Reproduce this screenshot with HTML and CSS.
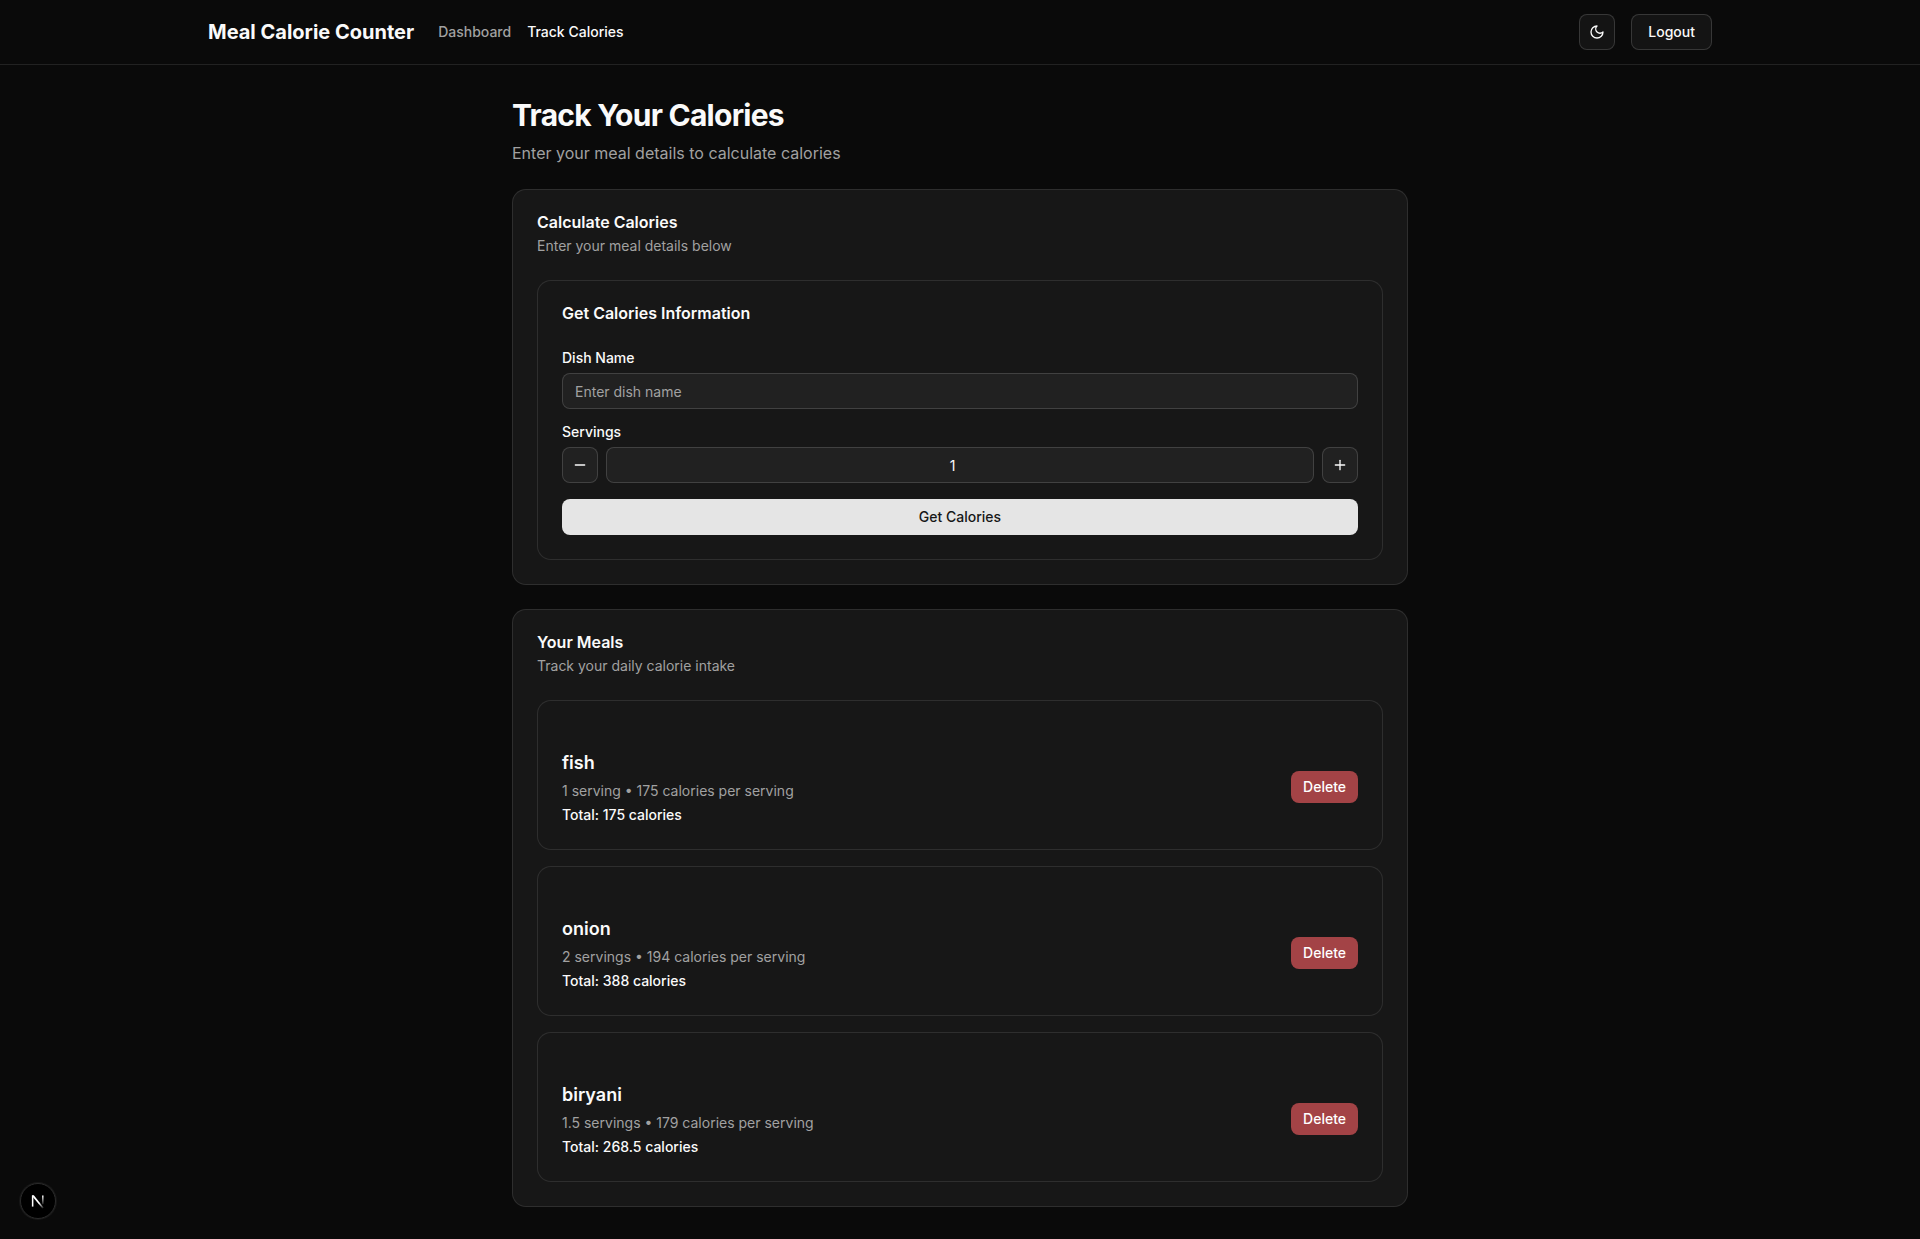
FILE: index.html
```html
<!DOCTYPE html>
<html lang="en">
<head>
<meta charset="utf-8">
<meta name="viewport" content="width=device-width, initial-scale=1">
<title>Meal Calorie Counter</title>
<link rel="stylesheet" href="styles.css">
</head>
<body>
<header class="site-header">
  <div class="container">
    <div class="header-left">
      <a class="brand" href="#">Meal Calorie Counter</a>
      <nav class="nav">
        <a class="nav-link" href="#">Dashboard</a>
        <a class="nav-link active" href="#" aria-current="page">Track Calories</a>
      </nav>
    </div>
    <div class="header-right">
      <button class="btn btn-outline btn-icon" type="button" aria-label="Toggle theme">
        <svg class="icon" viewBox="0 0 24 24"><path d="M12 3a6 6 0 0 0 9 9 9 9 0 1 1-9-9Z"/></svg>
      </button>
      <button class="btn btn-outline" type="button">Logout</button>
    </div>
  </div>
</header>

<main class="page">
  <div class="page-heading">
    <h1 class="page-title">Track Your Calories</h1>
    <p class="page-subtitle">Enter your meal details to calculate calories</p>
  </div>

  <section class="card">
    <div class="card-header">
      <h2 class="card-title">Calculate Calories</h2>
      <p class="card-description">Enter your meal details below</p>
    </div>
    <div class="card">
      <h3 class="card-title form-title">Get Calories Information</h3>
      <form class="form">
        <div class="field">
          <label class="label" for="dish">Dish Name</label>
          <input class="input" id="dish" type="text" placeholder="Enter dish name">
        </div>
        <div class="field">
          <label class="label" for="servings">Servings</label>
          <div class="stepper">
            <button class="btn btn-step btn-icon" type="button" aria-label="Decrease servings">
              <svg class="icon" viewBox="0 0 24 24"><path d="M5 12h14"/></svg>
            </button>
            <input class="input input-count" id="servings" type="number" min="0" step="0.5" value="1">
            <button class="btn btn-step btn-icon" type="button" aria-label="Increase servings">
              <svg class="icon" viewBox="0 0 24 24"><path d="M5 12h14"/><path d="M12 5v14"/></svg>
            </button>
          </div>
        </div>
        <button class="btn btn-primary" type="button">Get Calories</button>
      </form>
    </div>
  </section>

  <section class="card">
    <div class="card-header">
      <h2 class="card-title">Your Meals</h2>
      <p class="card-description">Track your daily calorie intake</p>
    </div>
    <div class="meals">
      <article class="card meal">
        <div class="meal-info">
          <h3 class="meal-name">fish</h3>
          <p class="meal-detail">1 serving • 175 calories per serving</p>
          <p class="meal-total">Total: 175 calories</p>
        </div>
        <button class="btn btn-danger" type="button">Delete</button>
      </article>
      <article class="card meal">
        <div class="meal-info">
          <h3 class="meal-name">onion</h3>
          <p class="meal-detail">2 servings • 194 calories per serving</p>
          <p class="meal-total">Total: 388 calories</p>
        </div>
        <button class="btn btn-danger" type="button">Delete</button>
      </article>
      <article class="card meal">
        <div class="meal-info">
          <h3 class="meal-name">biryani</h3>
          <p class="meal-detail">1.5 servings • 179 calories per serving</p>
          <p class="meal-total">Total: 268.5 calories</p>
        </div>
        <button class="btn btn-danger" type="button">Delete</button>
      </article>
    </div>
  </section>
</main>

<button class="dev-badge" type="button" aria-label="Open Next.js Dev Tools">
  <svg class="dev-logo" viewBox="0 0 40 40" fill="none">
    <defs>
      <linearGradient id="fade-stem" x1="26" y1="13" x2="26" y2="26" gradientUnits="userSpaceOnUse">
        <stop stop-color="#fff"/><stop offset="1" stop-color="#fff" stop-opacity="0"/>
      </linearGradient>
      <linearGradient id="fade-diagonal" x1="22" y1="22" x2="28" y2="29" gradientUnits="userSpaceOnUse">
        <stop stop-color="#fff"/><stop offset="1" stop-color="#fff" stop-opacity="0"/>
      </linearGradient>
    </defs>
    <path d="M13.3 27V13.2" stroke="#fff" stroke-width="1.9"/>
    <path d="M12.4 12.8H14.8L27.2 28.4L25.6 29.4L13.3 14.8Z" fill="url(#fade-diagonal)"/>
    <path d="M26 13V24" stroke="url(#fade-stem)" stroke-width="1.9"/>
  </svg>
</button>
</body>
</html>
```
FILE: styles.css
```css
*,
*::before,
*::after {
  box-sizing: border-box;
}

:root {
  --background: #0a0a0a;
  --card: #171717;
  --foreground: #fafafa;
  --muted: #a1a1a1;
  --border: rgba(255, 255, 255, 0.1);
  --input-border: rgba(255, 255, 255, 0.15);
  --input-fill: rgba(255, 255, 255, 0.045);
}

body {
  margin: 0;
  background: var(--background);
  color: var(--foreground);
  font-family: Inter, "Liberation Sans", sans-serif;
  font-size: 16px;
  line-height: 24px;
}

h1, h2, h3, p {
  margin: 0;
}

a {
  color: inherit;
  text-decoration: none;
}

.site-header {
  border-bottom: 1px solid var(--border);
}

.container {
  display: flex;
  align-items: center;
  justify-content: space-between;
  max-width: 1536px;
  min-height: 64px;
  margin: 0 auto;
  padding: 0 16px;
}

.header-left {
  display: flex;
  align-items: center;
  gap: 24px;
}

.header-right,
.nav {
  display: flex;
  align-items: center;
  gap: 16px;
}

.brand {
  font-size: 20px;
  line-height: 28px;
  font-weight: 700;
}

.nav-link {
  font-size: 14px;
  line-height: 20px;
  font-weight: 500;
  color: var(--muted);
}

.nav-link.active {
  color: var(--foreground);
}

.btn {
  display: inline-flex;
  align-items: center;
  justify-content: center;
  height: 36px;
  padding: 0 16px;
  border: 0;
  border-radius: 8px;
  color: var(--foreground);
  font-family: inherit;
  font-size: 14px;
  line-height: 20px;
  font-weight: 500;
  cursor: pointer;
}

.btn-outline,
.btn-step {
  border: 1px solid var(--input-border);
  background: var(--input-fill);
}

.btn-icon {
  flex: none;
  width: 36px;
  padding: 0;
}

.btn-primary {
  background: #e5e5e5;
  color: #171717;
}

.btn-danger {
  height: 32px;
  padding: 0 12px;
  background: #a34346;
  color: #fff;
}

.icon {
  width: 16px;
  height: 16px;
  fill: none;
  stroke: currentColor;
  stroke-width: 2;
  stroke-linecap: round;
  stroke-linejoin: round;
}

.page {
  display: flex;
  flex-direction: column;
  gap: 24px;
  max-width: 928px;
  margin: 0 auto;
  padding: 32px 16px;
}

.page-heading {
  display: flex;
  flex-direction: column;
  gap: 8px;
}

.page-title {
  font-size: 30px;
  line-height: 36px;
  font-weight: 700;
  letter-spacing: -0.025em;
}

.page-subtitle {
  color: var(--muted);
}

.card {
  display: flex;
  flex-direction: column;
  gap: 24px;
  padding: 24px;
  border: 1px solid var(--border);
  border-radius: 14px;
  background: var(--card);
}

.card-header {
  display: flex;
  flex-direction: column;
  gap: 6px;
}

.card-title {
  font-size: 16px;
  line-height: 16px;
  font-weight: 600;
}

.form-title {
  padding-bottom: 6px;
}

.card-description,
.meal-detail {
  color: var(--muted);
  font-size: 14px;
  line-height: 20px;
}

.form,
.meals {
  display: flex;
  flex-direction: column;
  gap: 16px;
}

.field {
  display: flex;
  flex-direction: column;
  gap: 8px;
}

.label {
  font-size: 14px;
  line-height: 14px;
  font-weight: 500;
}

.input {
  width: 100%;
  height: 36px;
  padding: 4px 12px;
  border: 1px solid var(--input-border);
  border-radius: 8px;
  background: var(--input-fill);
  color: var(--foreground);
  font-family: inherit;
  font-size: 14px;
}

.input::placeholder {
  color: var(--muted);
}

.input-count {
  flex: 1;
  min-width: 0;
  text-align: center;
}

.stepper {
  display: flex;
  gap: 8px;
}

.meal {
  flex-direction: row;
  align-items: center;
  justify-content: space-between;
  padding-top: 48px;
}

.meal-info {
  display: flex;
  flex-direction: column;
  gap: 4px;
}

.meal-name {
  font-size: 18px;
  line-height: 28px;
  font-weight: 600;
}

.meal-total {
  font-size: 14px;
  line-height: 20px;
  font-weight: 500;
}

.dev-badge {
  position: fixed;
  left: 20px;
  bottom: 20px;
  display: flex;
  align-items: center;
  justify-content: center;
  width: 36px;
  height: 36px;
  padding: 0;
  border: 1px solid #2a2a2a;
  border-radius: 50%;
  background: #000;
  box-shadow: 0 0 0 1px #171717;
}

.dev-logo {
  width: 32px;
  height: 32px;
}
```
